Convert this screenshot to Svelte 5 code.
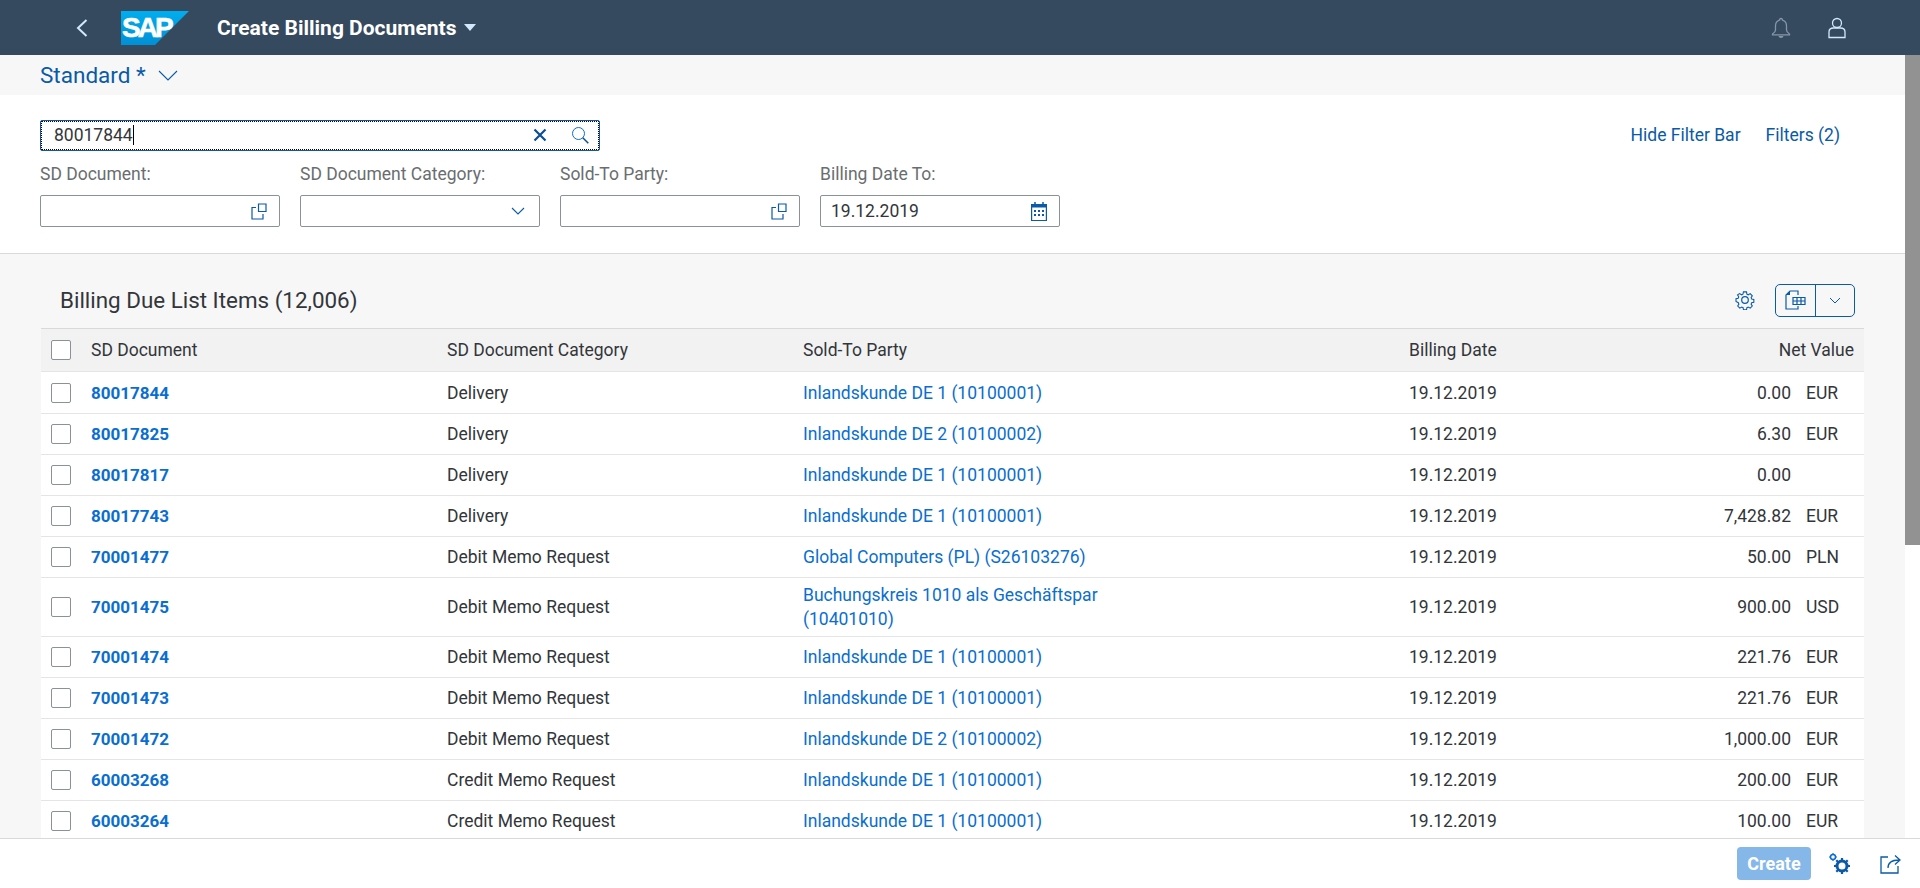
<script>
  const rows = [
    { doc: '80017844', cat: 'Delivery', party: 'Inlandskunde DE 1 (10100001)', date: '19.12.2019', net: '0.00', cur: 'EUR' },
    { doc: '80017825', cat: 'Delivery', party: 'Inlandskunde DE 2 (10100002)', date: '19.12.2019', net: '6.30', cur: 'EUR' },
    { doc: '80017817', cat: 'Delivery', party: 'Inlandskunde DE 1 (10100001)', date: '19.12.2019', net: '0.00', cur: '' },
    { doc: '80017743', cat: 'Delivery', party: 'Inlandskunde DE 1 (10100001)', date: '19.12.2019', net: '7,428.82', cur: 'EUR' },
    { doc: '70001477', cat: 'Debit Memo Request', party: 'Global Computers (PL) (S26103276)', date: '19.12.2019', net: '50.00', cur: 'PLN' },
    { doc: '70001475', cat: 'Debit Memo Request', party: 'Buchungskreis 1010 als Geschäftspar (10401010)', date: '19.12.2019', net: '900.00', cur: 'USD' },
    { doc: '70001474', cat: 'Debit Memo Request', party: 'Inlandskunde DE 1 (10100001)', date: '19.12.2019', net: '221.76', cur: 'EUR' },
    { doc: '70001473', cat: 'Debit Memo Request', party: 'Inlandskunde DE 1 (10100001)', date: '19.12.2019', net: '221.76', cur: 'EUR' },
    { doc: '70001472', cat: 'Debit Memo Request', party: 'Inlandskunde DE 2 (10100002)', date: '19.12.2019', net: '1,000.00', cur: 'EUR' },
    { doc: '60003268', cat: 'Credit Memo Request', party: 'Inlandskunde DE 1 (10100001)', date: '19.12.2019', net: '200.00', cur: 'EUR' },
    { doc: '60003264', cat: 'Credit Memo Request', party: 'Inlandskunde DE 1 (10100001)', date: '19.12.2019', net: '100.00', cur: 'EUR' }
  ];
</script>

<div class="page">
  <header class="shell">
    <svg class="back" viewBox="0 0 12 18" width="12" height="18"><path d="M10.500 1 2 9l8.500 8" fill="none" stroke="#d1e8ff" stroke-width="2"/></svg>
    <svg class="logo" viewBox="0 0 68 34" width="68" height="34">
      <defs><linearGradient id="sapg" x1="0" y1="0" x2="0" y2="1"><stop offset="0" stop-color="#00aeef"/><stop offset="1" stop-color="#0090d6"/></linearGradient></defs>
      <path d="M0 0h68L34 34H0z" fill="url(#sapg)"/>
      <text x="1" y="26" class="logo-text">SAP</text>
    </svg>
    <span class="app-title">Create Billing Documents</span>
    <svg class="title-caret" viewBox="0 0 12 8" width="12" height="8"><path d="M0 0h12L6 7z" fill="#d1e8ff"/></svg>
    <div class="shell-right">
      <svg viewBox="0 0 20 22" width="20" height="22"><path d="M10 1.500c-1 0-1.500.7-1.500 1.600C6 3.800 4.500 6 4.500 9v4c0 1.500-1.500 3-3 4v.8h17V17c-1.500-1-3-2.500-3-4V9c0-3-1.500-5.200-4-5.900 0-.9-.5-1.600-1.500-1.600z" fill="none" stroke="#8696a9" stroke-width="1.300"/><path d="M7.500 19h5c-.3 1.300-1.200 2-2.500 2s-2.200-.7-2.500-2z" fill="#8696a9"/></svg>
      <svg viewBox="0 0 18 22" width="18" height="22"><circle cx="9" cy="6" r="4.500" fill="none" stroke="#d1e8ff" stroke-width="1.300"/><path d="M1 20.500V15c0-2.500 2-4 4.500-4h7c2.500 0 4.500 1.500 4.500 4v5.500z" fill="none" stroke="#d1e8ff" stroke-width="1.300"/></svg>
    </div>
  </header>

  <div class="variant">
    <span class="variant-name">Standard *</span>
    <svg viewBox="0 0 20 11" width="20" height="11"><path d="M1 1l9 9 9-9" fill="none" stroke="#0a5aa8" stroke-width="1.100"/></svg>
  </div>

  <section class="filterbar">
    <div class="filter-top">
      <div class="search">
        <span class="search-value">80017844</span><span class="caret"></span>
        <span class="grow"></span>
        <svg viewBox="0 0 14 14" width="14" height="14"><path d="M1.500 1.500l11 11m0-11l-11 11" stroke="#0a4f96" stroke-width="2.200" fill="none"/></svg>
        <svg class="search-icon" viewBox="0 0 18 18" width="18" height="18"><circle cx="7.500" cy="7.500" r="6" fill="none" stroke="#0a6ed1" stroke-width="1"/><path d="M11.800 11.800l5.500 5.500" stroke="#0a4f96" stroke-width="1.500"/></svg>
      </div>
      <div class="filter-actions">
        <span>Hide Filter Bar</span>
        <span>Filters (2)</span>
      </div>
    </div>
    <div class="filter-fields">
      <div class="field">
        <span class="field-label">SD Document:</span>
        <div class="input">
          <svg viewBox="0 0 16 17" width="16" height="17"><path d="M7.500 1h7.500v7.500H7.500zM5 4.500H1V16h11v-5" fill="none" stroke="#0a5aa8" stroke-width="1.200"/></svg>
        </div>
      </div>
      <div class="field">
        <span class="field-label">SD Document Category:</span>
        <div class="input">
          <svg class="select-arrow" viewBox="0 0 14 8" width="14" height="8"><path d="M1 1l6 6 6-6" fill="none" stroke="#0a5aa8" stroke-width="1.100"/></svg>
        </div>
      </div>
      <div class="field">
        <span class="field-label">Sold-To Party:</span>
        <div class="input">
          <svg viewBox="0 0 16 17" width="16" height="17"><path d="M7.500 1h7.500v7.500H7.500zM5 4.500H1V16h11v-5" fill="none" stroke="#0a5aa8" stroke-width="1.200"/></svg>
        </div>
      </div>
      <div class="field">
        <span class="field-label">Billing Date To:</span>
        <div class="input">
          <span class="input-value">19.12.2019</span>
          <svg viewBox="0 0 16 19" width="16" height="19"><path d="M.6 2.500h14.800v16H.6z" fill="none" stroke="#0a5aa8" stroke-width="1.200"/><path d="M0 2h16v3.500H0z" fill="#0a5aa8"/><path d="M4 0v3M12 0v3" stroke="#0a5aa8" stroke-width="1.500"/><path d="M3 8h2v2H3zM7 8h2v2H7zM11 8h2v2h-2zM3 12h2v2H3zM7 12h2v2H7zM11 12h2v2h-2z" fill="#0a5aa8"/></svg>
        </div>
      </div>
    </div>
  </section>

  <main class="content">
    <div class="toolbar">
      <h2>Billing Due List Items (12,006)</h2>
      <svg class="gear" viewBox="0 0 20 20" width="20" height="20"><circle cx="10" cy="10" r="3.300" fill="none" stroke="#0a5aa8" stroke-width="1.200"/><path d="M8.300 1h3.400l.4 2.500 1.500.7 2.200-1.300 2.300 2.400-1.300 2.100.6 1.600 2.400.5v3l-2.400.5-.6 1.600 1.300 2.100-2.300 2.400-2.200-1.300-1.500.7-.4 2.500H8.300l-.4-2.500-1.500-.7-2.200 1.300-2.300-2.400 1.300-2.100-.6-1.600L0 11.500v-3l2.400-.5.600-1.600-1.300-2.100L4 2.900l2.200 1.300 1.500-.7z" transform="translate(1 1) scale(.9)" fill="none" stroke="#0a5aa8" stroke-width="1.200"/></svg>
      <div class="export">
        <span class="export-main">
          <svg viewBox="0 0 21 20" width="21" height="20"><path d="M13 5V1H5L1 5v14h12v-3" fill="none" stroke="#0a5aa8" stroke-width="1.200"/><path d="M1 5l4-4v4z" fill="#0a5aa8"/><path d="M8 7.500h12v7H8z" fill="none" stroke="#0a5aa8" stroke-width="1.200"/><path d="M8 11h12M12 7.500v7M16 7.500v7" stroke="#0a5aa8" stroke-width="1.200"/></svg>
        </span>
        <span class="export-arrow">
          <svg viewBox="0 0 12 7" width="12" height="7"><path d="M1 1l5 5 5-5" fill="none" stroke="#0a5aa8" stroke-width="1"/></svg>
        </span>
      </div>
    </div>

    <div class="table">
      <div class="row head">
        <div class="check-cell"><span class="check"></span></div>
        <div>SD Document</div>
        <div>SD Document Category</div>
        <div>Sold-To Party</div>
        <div>Billing Date</div>
        <div class="net-head">Net Value</div>
      </div>
      {#each rows as r}
        <div class="row">
          <div class="check-cell"><span class="check"></span></div>
          <div class="doc">{r.doc}</div>
          <div>{r.cat}</div>
          <div class="party"><span>{r.party}</span></div>
          <div>{r.date}</div>
          <div class="net"><span>{r.net}</span><span class="cur">{r.cur}</span></div>
        </div>
      {/each}
    </div>
  </main>

  <footer class="footer">
    <span class="create">Create</span>
    <svg class="tune" viewBox="0 0 21 21" width="21" height="21"><circle cx="13" cy="13" r="5" fill="none" stroke="#0a5aa8" stroke-width="3"/><path d="M13 5v3M13 18v3M5 13h3M18 13h3M7.300 7.300l2 2M16.700 16.700l2 2M18.700 7.300l-2 2M9.300 16.700l-2 2" stroke="#0a5aa8" stroke-width="2.200"/><circle cx="4" cy="4" r="2.500" fill="none" stroke="#0a6ed1" stroke-width="1.500"/><path d="M4 0v1.500M4 6.500V8M0 4h1.500M6.500 4H8" stroke="#0a6ed1" stroke-width="1.200"/></svg>
    <svg viewBox="0 0 21 20" width="21" height="20"><path d="M8 3H1v16h17v-7" fill="none" stroke="#0a5aa8" stroke-width="1.300"/><path d="M8 14c0-5 3-8 11-8M15 1.500 20 6l-5 4.500" fill="none" stroke="#0a5aa8" stroke-width="1.300"/></svg>
  </footer>

  <div class="scrollbar"><div class="thumb"></div></div>
</div>

<style>
  :global(body) {
    margin: 0;
    overflow: hidden;
  }

  .page {
    position: relative;
    width: 1920px;
    height: 888px;
    overflow: hidden;
    display: flex;
    flex-direction: column;
    font-family: Roboto, "Liberation Sans", sans-serif;
    font-size: 17.5px;
    color: #32363a;
    background: #f7f7f7;
  }

  .shell {
    flex: 0 0 55px;
    display: flex;
    align-items: center;
    background: #354a5f;
    padding-left: 76px;
    padding-right: 74px;
  }

  .logo {
    margin-left: 33px;
  }

  .logo-text {
    font-family: "Liberation Sans", sans-serif;
    font-weight: 700;
    font-size: 28px;
    letter-spacing: -3px;
    fill: #fff;
    stroke: #fff;
    stroke-width: 0.6px;
  }

  .app-title {
    margin-left: 28px;
    color: #fff;
    font-size: 21px;
    font-weight: 700;
  }

  .title-caret {
    margin-left: 7px;
  }

  .shell-right {
    margin-left: auto;
    display: flex;
    align-items: center;
    gap: 37px;
  }

  .variant {
    flex: 0 0 40px;
    display: flex;
    align-items: center;
    gap: 12px;
    padding-left: 40px;
    box-sizing: border-box;
  }

  .variant-name {
    font-size: 22.5px;
    color: #0a5aa8;
  }

  .filterbar {
    flex: 0 0 159px;
    box-sizing: border-box;
    background: #fff;
    border-bottom: 1px solid #d9d9d9;
    padding: 25px 0 0 40px;
  }

  .filter-top {
    display: flex;
    align-items: center;
    padding-right: 80px;
  }

  .search {
    width: 560px;
    height: 31px;
    box-sizing: border-box;
    display: flex;
    align-items: center;
    gap: 24px;
    border: 1px solid #0a5aa8;
    outline: 1px dotted #000;
    outline-offset: -2px;
    border-radius: 2px;
    padding: 0 10px 1px 13px;
  }

  .search-value {
    margin-right: -24px;
  }

  .caret {
    width: 1px;
    height: 20px;
    background: #000;
    margin-right: -24px;
  }

  .grow {
    flex: 1;
  }

  .filter-actions {
    margin-left: auto;
    margin-top: -2px;
    display: flex;
    gap: 25px;
    color: #0a5aa8;
  }

  .filter-fields {
    display: flex;
    gap: 20px;
    margin-top: 13px;
  }

  .field {
    width: 240px;
    display: flex;
    flex-direction: column;
    gap: 11px;
  }

  .field-label {
    color: #6a6d70;
    line-height: 20px;
  }

  .input {
    height: 32px;
    box-sizing: border-box;
    border: 1px solid #89919a;
    border-radius: 2px;
    display: flex;
    align-items: center;
    justify-content: flex-end;
    background: #fff;
    padding: 0 12px 0 10px;
  }

  .input-value {
    margin-right: auto;
  }

  .select-arrow {
    margin-right: 2px;
  }

  .content {
    flex: 1;
    min-height: 0;
    overflow: hidden;
    padding: 0 56px 0 41px;
  }

  .toolbar {
    height: 74px;
    display: flex;
    align-items: center;
    padding: 18px 9px 0 19px;
    box-sizing: border-box;
  }

  .toolbar h2 {
    margin: 0 auto 0 0;
    font-size: 22.4px;
    font-weight: 400;
  }

  .gear {
    margin-right: 20px;
  }

  .export {
    display: flex;
    height: 33px;
    box-sizing: border-box;
    border: 1px solid #0a5aa8;
    border-radius: 5px;
  }

  .export-main {
    width: 39px;
    display: flex;
    align-items: center;
    justify-content: center;
    border-right: 1px solid #0a5aa8;
  }

  .export-arrow {
    width: 38px;
    display: flex;
    align-items: center;
    justify-content: center;
  }

  .table {
    border-top: 1px solid #d9d9d9;
    background: #fff;
  }

  .row {
    display: grid;
    grid-template-columns: 50px 356px 356px 606px 200px 255px;
    align-items: center;
    min-height: 41px;
    box-sizing: border-box;
    border-bottom: 1px solid #e5e5e5;
  }

  .row:nth-child(2) {
    min-height: 42px;
  }

  .head {
    min-height: 43px;
    background: #f2f2f2;
  }

  .check-cell {
    display: flex;
    padding-left: 10px;
  }

  .check {
    width: 20px;
    height: 20px;
    box-sizing: border-box;
    border: 1px solid #89919a;
    border-radius: 2px;
    background: #fff;
  }

  .doc {
    color: #0a6ed1;
    font-size: 17px;
    font-weight: 700;
  }

  .party {
    color: #0a6ed1;
    line-height: 24px;
    padding: 5px 0;
  }

  .party span {
    display: block;
    width: 300px;
  }

  .net-head {
    text-align: right;
    padding-right: 10px;
  }

  .net {
    display: flex;
    justify-content: flex-end;
    gap: 15px;
    padding-right: 22px;
  }

  .cur {
    width: 36px;
  }

  .footer {
    position: relative;
    flex: 0 0 50px;
    box-sizing: border-box;
    background: #fff;
    border-top: 1px solid #d9d9d9;
    display: flex;
    align-items: center;
    justify-content: flex-end;
    gap: 30px;
    padding-right: 19px;
    z-index: 1;
  }

  .create {
    width: 74px;
    height: 33px;
    line-height: 33px;
    text-align: center;
    border-radius: 4px;
    background: #85b7e8;
    color: #fff;
    font-size: 18px;
    font-weight: 700;
  }

  .tune {
    margin-left: -12px;
  }

  .scrollbar {
    position: absolute;
    top: 55px;
    right: 0;
    bottom: 50px;
    width: 15px;
    background: #fff;
    z-index: 2;
  }

  .thumb {
    height: 490px;
    background: #929292;
  }
</style>
